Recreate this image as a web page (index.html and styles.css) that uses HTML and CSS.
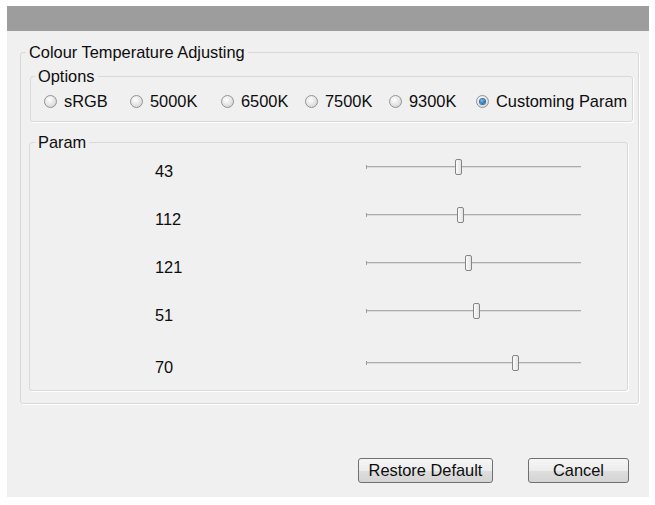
FILE: index.html
```html
<!DOCTYPE html>
<html lang="en">
<head>
    <meta charset="UTF-8">
    <title>Colour Temperature Adjusting</title>
    <link rel="stylesheet" href="styles.css">
</head>
<body>
    <div class="window">
        <div class="titlebar"></div>

        <div class="dialog">
            <fieldset class="group outer">
                <legend>Colour Temperature Adjusting</legend>

                <fieldset class="group options">
                    <legend>Options</legend>
                    <div class="radios">
                        <label class="radio"><span class="circle"></span>sRGB</label>
                        <label class="radio"><span class="circle"></span>5000K</label>
                        <label class="radio"><span class="circle"></span>6500K</label>
                        <label class="radio"><span class="circle"></span>7500K</label>
                        <label class="radio"><span class="circle"></span>9300K</label>
                        <label class="radio checked"><span class="circle"></span>Customing Param</label>
                    </div>
                </fieldset>

                <fieldset class="group param">
                    <legend>Param</legend>
                    <div class="row">
                        <span class="value">43</span>
                        <div class="slider"><span class="thumb" style="left: 43%"></span></div>
                    </div>
                    <div class="row">
                        <span class="value">112</span>
                        <div class="slider"><span class="thumb" style="left: 43.9%"></span></div>
                    </div>
                    <div class="row">
                        <span class="value">121</span>
                        <div class="slider"><span class="thumb" style="left: 47.5%"></span></div>
                    </div>
                    <div class="row">
                        <span class="value">51</span>
                        <div class="slider"><span class="thumb" style="left: 51%"></span></div>
                    </div>
                    <div class="row last">
                        <span class="value">70</span>
                        <div class="slider"><span class="thumb" style="left: 69.5%"></span></div>
                    </div>
                </fieldset>
            </fieldset>

            <div class="buttons">
                <button class="btn restore">Restore Default</button>
                <button class="btn cancel">Cancel</button>
            </div>
        </div>
    </div>
</body>
</html>
```

FILE: styles.css
```css
body {
    margin: 0;
    background-color: #ffffff;
    font-family: "Liberation Sans", Arial, sans-serif;
    font-size: 16.4px;
    line-height: 18px;
    color: #0d0d0d;
}

.window {
    width: 642px;
    margin: 6px 0 0 7px;
}

.titlebar {
    height: 25px;
    background-color: #9d9d9d;
}

.dialog {
    background-color: #f0f0f0;
    padding: 12px 10px 14px 13px;
}

/* group boxes */
.group {
    margin: 0;
    border: 1px solid #d9d9d9;
    border-radius: 3px;
    box-shadow: 1px 1px 0 #ffffff;
    min-width: 0;
}

.group legend {
    padding: 0 3px;
    line-height: 18px;
}

.outer {
    padding: 6px 5px 12px 9px;
}

.outer > legend {
    margin-left: -4px;
}

.options {
    padding: 7px 4px 11px 13px;
}

.options > legend {
    margin-left: -9px;
}

.param {
    margin: 11px 5px 0 -1px;
    padding: 6px 8px 17px 8px;
}

.param > legend {
    margin-left: -3px;
}

/* radio buttons */
.radios {
    display: grid;
    grid-template-columns: 86px 91px 84px 84px 87px auto;
    align-items: center;
}

.radio {
    display: flex;
    align-items: center;
    gap: 7px;
    white-space: nowrap;
}

.circle {
    width: 11px;
    height: 11px;
    border: 1px solid #939393;
    border-radius: 50%;
    background: radial-gradient(circle at 40% 35%, #ffffff 0%, #e6e6e6 50%, #c9c9c9 100%);
    display: flex;
    align-items: center;
    justify-content: center;
    flex-shrink: 0;
}

.checked .circle::after {
    content: "";
    width: 5px;
    height: 5px;
    border-radius: 50%;
    background: radial-gradient(circle at 40% 35%, #7cc4f0 0%, #2a7bc0 55%, #1a4f86 100%);
    box-shadow: 0 0 0 1px #3b6ea0;
}

/* slider rows */
.row {
    display: grid;
    grid-template-columns: 117px 211px 215px;
    grid-template-rows: 20px;
    align-items: center;
    margin-top: 28px;
}

legend + .row {
    margin-top: 0;
}

.row.last {
    margin-top: 32px;
}

.value {
    grid-column: 2;
    margin-top: 7px;
    white-space: nowrap;
}

.slider {
    grid-column: 3;
    position: relative;
    height: 20px;
}

.slider::before {
    content: "";
    position: absolute;
    left: 0;
    right: 0;
    top: 9px;
    height: 1px;
    background-color: #acacac;
    border-bottom: 1px solid #dcdcdc;
}

.slider::after {
    content: "";
    position: absolute;
    left: 0;
    top: 8px;
    width: 1px;
    height: 4px;
    background-color: #9c9c9c;
}

.thumb {
    position: absolute;
    top: 2px;
    width: 5px;
    height: 14px;
    margin-left: -3px;
    border: 1px solid #858585;
    border-radius: 2px;
    background: linear-gradient(to right, #fbfbfb, #e2e2e2);
    z-index: 1;
}

/* bottom buttons */
.buttons {
    display: flex;
    justify-content: flex-end;
    gap: 35px;
    margin-top: 54px;
    padding-right: 10px;
}

.btn {
    height: 25px;
    padding: 0;
    border: 1px solid #707070;
    border-radius: 3px;
    background: linear-gradient(#f6f6f6 0%, #ececec 50%, #dedede 51%, #d4d4d4 100%);
    font-family: "Liberation Sans", Arial, sans-serif;
    font-size: 16.4px;
    color: #0d0d0d;
}

.restore {
    width: 135px;
}

.cancel {
    width: 101px;
}
```
